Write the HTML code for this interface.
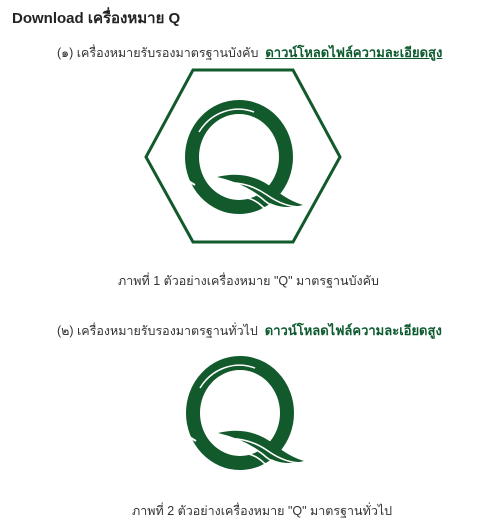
<!DOCTYPE html>
<html><head><meta charset="utf-8"><style>
body{margin:0;width:482px;height:530px;background:#fff;font-family:"Liberation Sans","Noto Sans CJK SC",sans-serif;color:#333;position:relative;overflow:hidden}
.t{position:absolute;white-space:nowrap;font-size:12.5px}
a{color:#0d5a2e;font-weight:bold;text-decoration:underline;font-size:13px}
</style></head><body>
<div class="t" style="left:12px;top:6px;font-size:15px;font-weight:bold;color:#222">Download เครื่องหมาย Q</div>
<div class="t" style="left:57px;top:42px">(๑) เครื่องหมายรับรองมาตรฐานบังคับ &nbsp;<a>ดาวน์โหลดไฟล์ความละเอียดสูง</a></div>
<svg style="position:absolute;left:0;top:0" width="482" height="530">
<defs>
<g id="q">
<ellipse cx="0" cy="0" rx="47" ry="50" fill="none" stroke="#125a2c" stroke-width="14"/>
<path d="M-40,-25 A47,50 0 0 1 15,-45" fill="none" stroke="#fff" stroke-width="1.5"/>
<path d="M-54,22 L-44,28" stroke="#fff" stroke-width="2"/>
<path d="M-22,20 Q10,12 35,32 Q50,44 64,48 Q40,54 25,42 Q5,26 -22,20 Z" fill="#125a2c"/>
<path d="M-20,27 Q5,22 28,38 Q45,50 62,50" fill="none" stroke="#fff" stroke-width="1.6"/>
<path d="M-14,33 Q10,29 26,44 Q40,55 58,52" fill="none" stroke="#fff" stroke-width="1.6"/>
<path d="M-6,40 Q12,38 24,50 Q36,58 52,54" fill="none" stroke="#fff" stroke-width="1.6"/>
</g>
</defs>
<polygon points="193,70 293,70 340,157 293,242 193,242 146,157" fill="none" stroke="#125a2c" stroke-width="3"/>
<use href="#q" transform="translate(239,157)"/>
<use href="#q" transform="translate(240,413)"/>
</svg>
<div class="t" style="left:118px;top:271px">ภาพที่ 1 ตัวอย่างเครื่องหมาย "Q" มาตรฐานบังคับ</div>
<div class="t" style="left:57px;top:320px">(๒) เครื่องหมายรับรองมาตรฐานทั่วไป &nbsp;<a style="text-decoration:none">ดาวน์โหลดไฟล์ความละเอียดสูง</a></div>
<div class="t" style="left:132px;top:501px">ภาพที่ 2 ตัวอย่างเครื่องหมาย "Q" มาตรฐานทั่วไป</div>
</body></html>
